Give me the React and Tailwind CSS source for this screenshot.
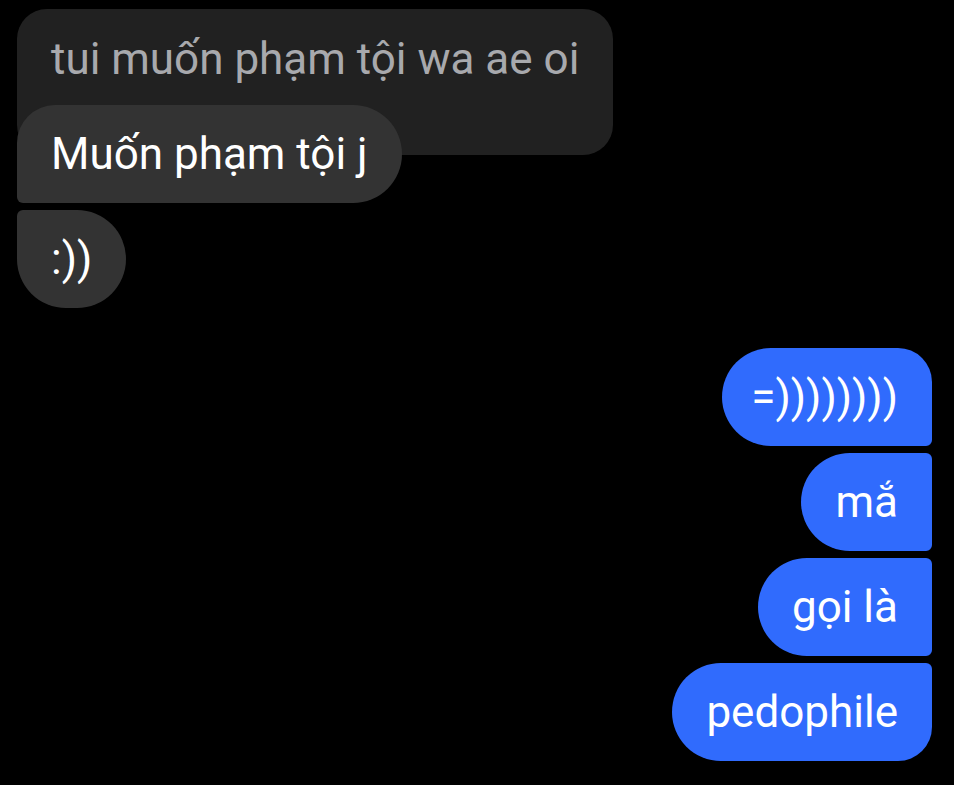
export default function App() {
  const bubble = "pt-[23px] pb-[23px] px-[34px] text-[44px] leading-[52px] whitespace-nowrap"

  return (
    <div className="min-h-screen bg-black pt-[9px] pl-[17px] pr-[22px] font-['Roboto',sans-serif]">

      {/* tin nhắn nhận */}
      <div className="flex flex-col items-start">
        <div className="bg-[#212121] text-[#a8a9ad] rounded-[30px] px-[34px] pt-[24px] pb-[70px] text-[44px] leading-[52px] whitespace-nowrap">
          tui muốn phạm tội wa ae oi
        </div>
        <div className={`${bubble} relative -mt-[50px] bg-[#333333] text-white rounded-tl-[38px] rounded-r-[49px] rounded-bl-[6px]`}>
          Muốn phạm tội j
        </div>
        <div className={`${bubble} mt-[7px] bg-[#333333] text-white rounded-tl-[6px] rounded-r-[49px] rounded-bl-[49px]`}>
          :))
        </div>
      </div>

      {/* tin nhắn gửi */}
      <div className="mt-[40px] flex flex-col items-end gap-[7px]">
        <div className={`${bubble} pl-[29px] bg-[#306bfd] text-white rounded-l-[49px] rounded-tr-[34px] rounded-br-[6px]`}>
          =))))))))
        </div>
        <div className={`${bubble} bg-[#306bfd] text-white rounded-l-[49px] rounded-r-[6px]`}>
          mắ
        </div>
        <div className={`${bubble} bg-[#306bfd] text-white rounded-l-[49px] rounded-r-[6px]`}>
          gọi là
        </div>
        <div className={`${bubble} bg-[#306bfd] text-white rounded-l-[49px] rounded-tr-[6px] rounded-br-[34px]`}>
          pedophile
        </div>
      </div>

    </div>
  )
}
